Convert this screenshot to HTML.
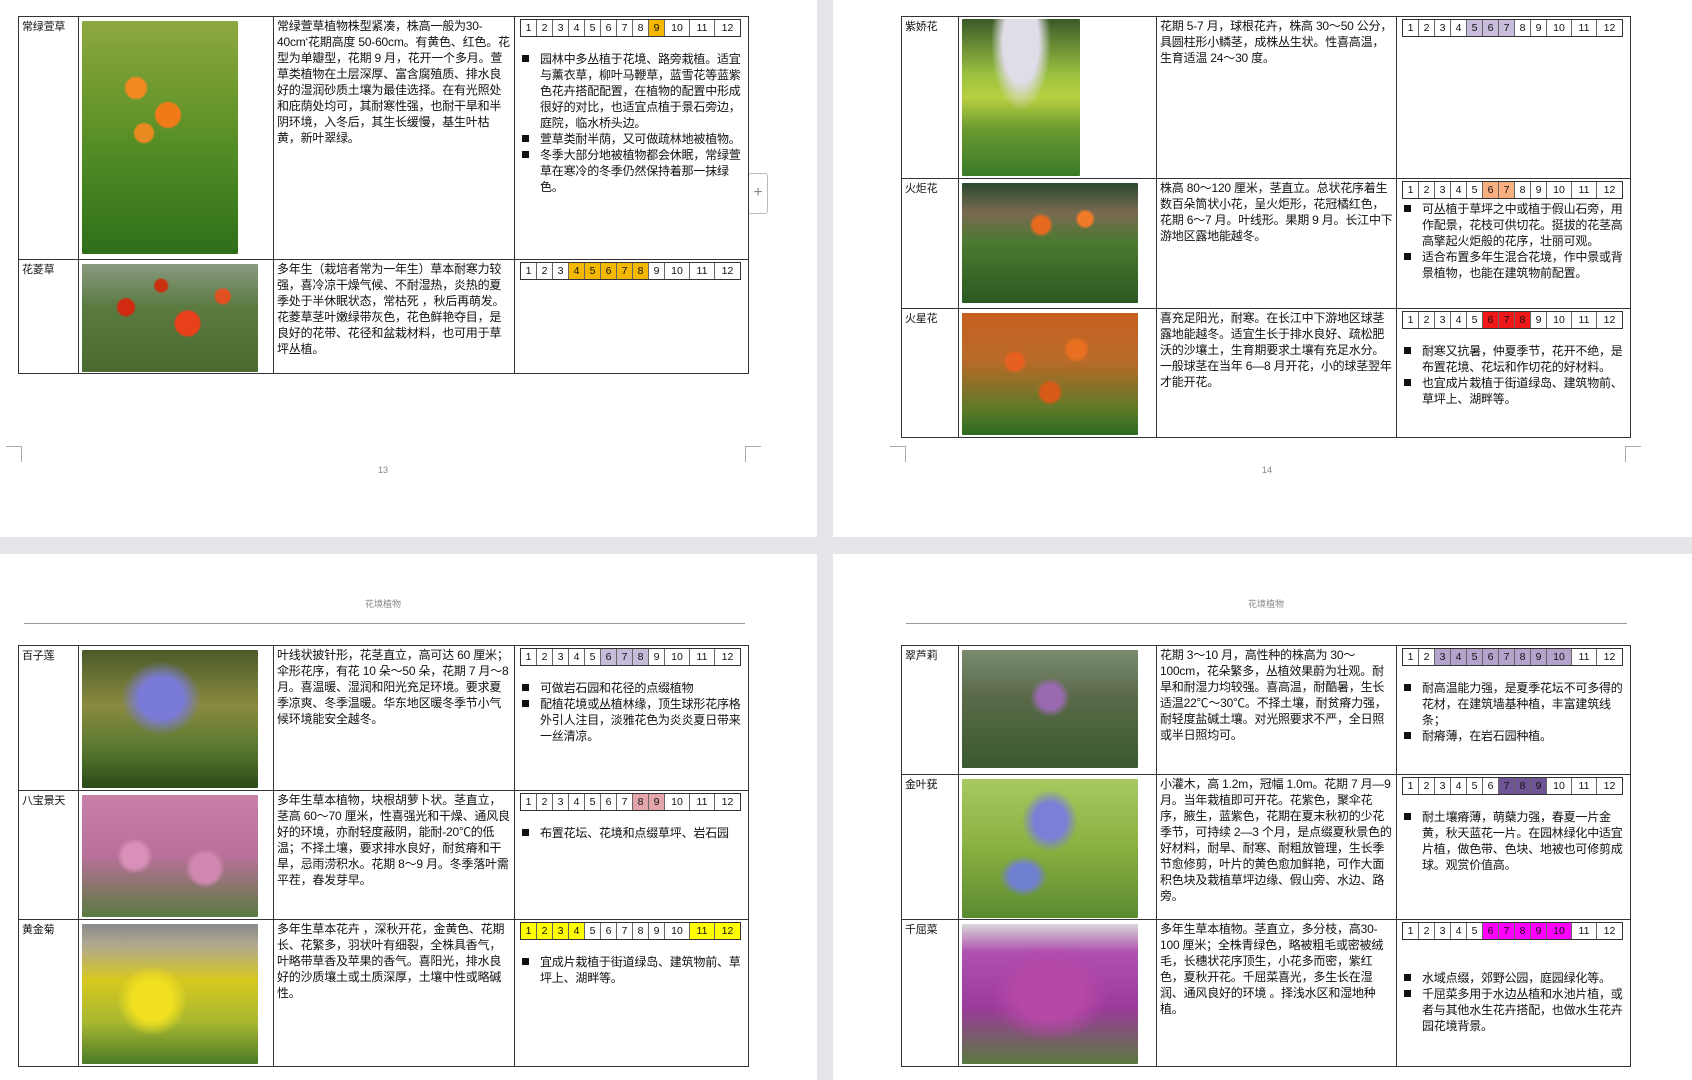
<!DOCTYPE html>
<html><head><meta charset="utf-8"><style>
*{margin:0;padding:0;box-sizing:border-box}
body{width:1692px;height:1080px;background:#e4e6e9;position:relative;overflow:hidden;font-family:"Liberation Sans","Noto Sans CJK SC",sans-serif;color:#111}
.pg{position:absolute;background:#fff}
.t{position:absolute;border-collapse:collapse;table-layout:fixed}
.t td{border:1.5px solid #333;vertical-align:top;font-size:12px;line-height:16px;padding:1px 3px;overflow:hidden;letter-spacing:-0.2px}
.t td.n{font-size:11px;padding:2px 3px}
.img{margin:3px 0 0 0;border-radius:1px}
.m{display:flex;border:1px solid #333;height:18px;width:221px;margin:1px 0 0 2px}
.m span{flex:0 0 16px;border-right:1px solid #666;font-size:10.5px;text-align:center;line-height:17px;letter-spacing:0}
.m span.w{flex:1 1 24px}
.m span:last-child{border-right:0}
ul{list-style:none;margin-top:14px}
li{position:relative;padding-left:22px;font-size:12px;line-height:16px}
li:before{content:"";position:absolute;left:4px;top:4px;width:7px;height:7px;background:#111}
.hd{position:absolute;font-size:9px;color:#888}
.hl{position:absolute;height:1px;background:#999}
.cm{position:absolute;border-color:#aaa;border-style:solid;width:16px;height:16px}
</style></head><body>
<div class="pg" style="left:0;top:0;width:817px;height:537px"></div>
<div class="pg" style="left:833px;top:0;width:859px;height:537px"></div>
<div class="pg" style="left:0;top:554px;width:817px;height:526px"></div>
<div class="pg" style="left:833px;top:554px;width:859px;height:526px"></div>

<div class="cm" style="left:6px;top:446px;border-width:1px 1px 0 0"></div>
<div class="cm" style="left:745px;top:446px;border-width:1px 0 0 1px"></div>
<div class="cm" style="left:890px;top:446px;border-width:1px 1px 0 0"></div>
<div class="cm" style="left:1625px;top:446px;border-width:1px 0 0 1px"></div>
<div class="hd" style="left:378px;top:465px">13</div>
<div class="hd" style="left:1262px;top:465px">14</div>
<div class="hd" style="left:365px;top:597px">花境植物</div>
<div class="hd" style="left:1248px;top:597px">花境植物</div>
<div class="hl" style="left:24px;top:623px;width:721px"></div>
<div class="hl" style="left:906px;top:623px;width:721px"></div>
<div style="position:absolute;left:748px;top:173px;width:20px;height:41px;border:1px solid #bbb;border-radius:3px;background:#fff;color:#888;font-size:16px;text-align:center;line-height:38px">+</div>

<!-- top-left -->
<table class="t" style="left:18px;top:16px;width:730px">
<colgroup><col style="width:60px"><col style="width:195px"><col style="width:241px"><col style="width:234px"></colgroup>
<tr style="height:243px"><td class="n">常绿萱草</td><td><div class="img" style="width:156px;height:233px;background:linear-gradient(180deg,#8ea840 0%,#6f9a2e 30%,#4e8a24 60%,#2f6e1a 100%)"><div style="position:relative;top:40px;left:30px;width:80px;height:90px;background:radial-gradient(circle at 30% 30%,#f08a20 0 10px,transparent 12px),radial-gradient(circle at 70% 60%,#f07a18 0 12px,transparent 14px),radial-gradient(circle at 40% 80%,#e88a20 0 9px,transparent 11px)"></div></div></td>
<td>常绿萱草植物株型紧凑，株高一般为30-40cm‘花期高度 50-60cm。有黄色、红色。花型为单瓣型，花期 9 月，花开一个多月。萱草类植物在土层深厚、富含腐殖质、排水良好的湿润砂质土壤为最佳选择。在有光照处和庇荫处均可，其耐寒性强，也耐干旱和半阴环境，入冬后，其生长缓慢，基生叶枯黄，新叶翠绿。</td>
<td><div class="m"><span>1</span><span>2</span><span>3</span><span>4</span><span>5</span><span>6</span><span>7</span><span>8</span><span style="background:#f5b800">9</span><span class="w">10</span><span class="w">11</span><span class="w">12</span></div>
<ul><li>园林中多丛植于花境、路旁栽植。适宜与薰衣草，柳叶马鞭草，蓝雪花等蓝紫色花卉搭配配置，在植物的配置中形成很好的对比，也适宜点植于景石旁边，庭院，临水桥头边。</li><li>萱草类耐半荫，又可做疏林地被植物。</li><li>冬季大部分地被植物都会休眠，常绿萱草在寒冷的冬季仍然保持着那一抹绿色。</li></ul></td></tr>
<tr style="height:113px"><td class="n">花菱草</td><td><div class="img" style="width:176px;height:108px;background:radial-gradient(circle at 60% 55%,#e84018 0 12px,transparent 14px),radial-gradient(circle at 25% 40%,#d02a10 0 8px,transparent 10px),radial-gradient(circle at 45% 20%,#c83010 0 6px,transparent 8px),radial-gradient(circle at 80% 30%,#e05020 0 7px,transparent 9px),linear-gradient(180deg,#8a9a80,#5a7a40 40%,#4a6a30)"></div></td>
<td>多年生（栽培者常为一年生）草本耐寒力较强，喜冷凉干燥气候、不耐湿热，炎热的夏季处于半休眠状态，常枯死 ，秋后再萌发。花菱草茎叶嫩绿带灰色，花色鲜艳夺目，是良好的花带、花径和盆栽材料，也可用于草坪丛植。</td>
<td><div class="m"><span>1</span><span>2</span><span>3</span><span style="background:#f5b800">4</span><span style="background:#f5b800">5</span><span style="background:#f5b800">6</span><span style="background:#f5b800">7</span><span style="background:#f5b800">8</span><span>9</span><span class="w">10</span><span class="w">11</span><span class="w">12</span></div></td></tr>
</table>

<!-- top-right -->
<table class="t" style="left:901px;top:16px;width:729px">
<colgroup><col style="width:57px"><col style="width:198px"><col style="width:240px"><col style="width:234px"></colgroup>
<tr style="height:162px"><td class="n">紫娇花</td><td><div class="img" style="margin-top:1px;width:118px;height:157px;background:radial-gradient(ellipse at 50% 15%,#e0dce8 0 18px,transparent 30px),linear-gradient(180deg,#3a5a28 0%,#9ac040 35%,#b8d040 50%,#6a9a30 70%,#3a7a28 100%)"></div></td>
<td>花期 5-7 月，球根花卉，株高 30～50 公分，具圆柱形小鳞茎，成株丛生状。性喜高温，生育适温 24～30 度。</td>
<td><div class="m"><span>1</span><span>2</span><span>3</span><span>4</span><span style="background:#c8bcdc">5</span><span style="background:#c8bcdc">6</span><span style="background:#c8bcdc">7</span><span>8</span><span>9</span><span class="w">10</span><span class="w">11</span><span class="w">12</span></div></td></tr>
<tr style="height:130px"><td class="n">火炬花</td><td><div class="img" style="width:176px;height:120px;background:radial-gradient(circle at 45% 35%,#e86a20 0 8px,transparent 12px),radial-gradient(circle at 70% 30%,#f07a28 0 7px,transparent 10px),linear-gradient(180deg,#2a4a30 0%,#7a6a50 25%,#4a7a30 50%,#2a5a20 100%)"></div></td>
<td>株高 80～120 厘米，茎直立。总状花序着生数百朵筒状小花，呈火炬形，花冠橘红色，花期 6～7 月。叶线形。果期 9 月。长江中下游地区露地能越冬。</td>
<td><div class="m"><span>1</span><span>2</span><span>3</span><span>4</span><span>5</span><span style="background:#f8b080">6</span><span style="background:#f8b080">7</span><span>8</span><span>9</span><span class="w">10</span><span class="w">11</span><span class="w">12</span></div>
<ul style="margin-top:2px"><li>可丛植于草坪之中或植于假山石旁，用作配景，花枝可供切花。挺拔的花茎高高擎起火炬般的花序，壮丽可观。</li><li>适合布置多年生混合花境，作中景或背景植物，也能在建筑物前配置。</li></ul></td></tr>
<tr style="height:129px"><td class="n">火星花</td><td><div class="img" style="width:176px;height:122px;background:radial-gradient(circle at 30% 40%,#e86020 0 8px,transparent 12px),radial-gradient(circle at 65% 30%,#e87020 0 9px,transparent 13px),radial-gradient(circle at 50% 65%,#d85a18 0 9px,transparent 13px),linear-gradient(180deg,#c86020 0%,#b86a28 40%,#5a7a28 80%,#2a6a20 100%)"></div></td>
<td>喜充足阳光，耐寒。在长江中下游地区球茎露地能越冬。适宜生长于排水良好、疏松肥沃的沙壤土，生育期要求土壤有充足水分。一般球茎在当年 6—8 月开花，小的球茎翌年才能开花。</td>
<td><div class="m"><span>1</span><span>2</span><span>3</span><span>4</span><span>5</span><span style="background:#f01818">6</span><span style="background:#f01818">7</span><span style="background:#f01818">8</span><span>9</span><span class="w">10</span><span class="w">11</span><span class="w">12</span></div>
<ul><li>耐寒又抗暑，仲夏季节，花开不绝，是布置花境、花坛和作切花的好材料。</li><li>也宜成片栽植于街道绿岛、建筑物前、草坪上、湖畔等。</li></ul></td></tr>
</table>

<!-- bottom-left -->
<table class="t" style="left:18px;top:645px;width:730px">
<colgroup><col style="width:60px"><col style="width:195px"><col style="width:241px"><col style="width:234px"></colgroup>
<tr style="height:145px"><td class="n">百子莲</td><td><div class="img" style="width:176px;height:138px;background:radial-gradient(ellipse at 45% 35%,#7a7ad8 0 22px,transparent 40px),linear-gradient(180deg,#4a5a28 0%,#8a8a40 40%,#5a7a30 70%,#2a4a18 100%)"></div></td>
<td>叶线状披针形，花茎直立，高可达 60 厘米；伞形花序，有花 10 朵～50 朵，花期 7 月～8 月。喜温暖、湿润和阳光充足环境。要求夏季凉爽、冬季温暖。华东地区暖冬季节小气候环境能安全越冬。</td>
<td><div class="m"><span>1</span><span>2</span><span>3</span><span>4</span><span>5</span><span style="background:#c4bcd8">6</span><span style="background:#c4bcd8">7</span><span style="background:#c4bcd8">8</span><span>9</span><span class="w">10</span><span class="w">11</span><span class="w">12</span></div>
<ul><li>可做岩石园和花径的点缀植物</li><li>配植花境或丛植林缘，顶生球形花序格外引人注目，淡雅花色为炎炎夏日带来一丝清凉。</li></ul></td></tr>
<tr style="height:129px"><td class="n">八宝景天</td><td><div class="img" style="width:176px;height:122px;background:radial-gradient(circle at 30% 50%,#d890b8 0 12px,transparent 18px),radial-gradient(circle at 70% 60%,#d088b0 0 14px,transparent 20px),linear-gradient(180deg,#c880a8 0%,#b87098 50%,#5a7a40 100%)"></div></td>
<td>多年生草本植物，块根胡萝卜状。茎直立，茎高 60～70 厘米，性喜强光和干燥、通风良好的环境，亦耐轻度蔽阴，能耐-20℃的低温；不择土壤，要求排水良好，耐贫瘠和干旱，忌雨涝积水。花期 8～9 月。冬季落叶需平茬，春发芽早。</td>
<td><div class="m"><span>1</span><span>2</span><span>3</span><span>4</span><span>5</span><span>6</span><span>7</span><span style="background:#e4a4ac">8</span><span style="background:#e4a4ac">9</span><span class="w">10</span><span class="w">11</span><span class="w">12</span></div>
<ul><li>布置花坛、花境和点缀草坪、岩石园</li></ul></td></tr>
<tr style="height:147px"><td class="n">黄金菊</td><td><div class="img" style="width:176px;height:140px;background:radial-gradient(circle at 40% 55%,#f0e020 0 20px,transparent 35px),linear-gradient(180deg,#8a8a8a 0%,#b0a890 15%,#d8c820 40%,#a8b830 70%,#4a7a28 100%)"></div></td>
<td>多年生草本花卉 ，深秋开花，金黄色、花期长、花繁多，羽状叶有细裂，全株具香气，叶略带草香及苹果的香气。喜阳光，排水良好的沙质壤土或土质深厚，土壤中性或略碱性。</td>
<td><div class="m"><span style="background:#ffff00">1</span><span style="background:#ffff00">2</span><span style="background:#ffff00">3</span><span style="background:#ffff00">4</span><span>5</span><span>6</span><span>7</span><span>8</span><span>9</span><span class="w">10</span><span class="w" style="background:#ffff00">11</span><span class="w" style="background:#ffff00">12</span></div>
<ul><li>宜成片栽植于街道绿岛、建筑物前、草坪上、湖畔等。</li></ul></td></tr>
</table>

<!-- bottom-right -->
<table class="t" style="left:901px;top:645px;width:729px">
<colgroup><col style="width:57px"><col style="width:198px"><col style="width:240px"><col style="width:234px"></colgroup>
<tr style="height:129px"><td class="n">翠芦莉</td><td><div class="img" style="width:176px;height:118px;background:radial-gradient(circle at 50% 40%,#9a6ab0 0 12px,transparent 20px),linear-gradient(180deg,#7a8a70 0%,#5a6a48 40%,#3a5a30 100%)"></div></td>
<td>花期 3～10 月，高性种的株高为 30～100cm，花朵繁多，丛植效果蔚为壮观。耐旱和耐湿力均较强。喜高温，耐酷暑，生长适温22℃～30℃。不择土壤，耐贫瘠力强，耐轻度盐碱土壤。对光照要求不严，全日照或半日照均可。</td>
<td><div class="m"><span>1</span><span>2</span><span style="background:#b4a4cc">3</span><span style="background:#b4a4cc">4</span><span style="background:#b4a4cc">5</span><span style="background:#b4a4cc">6</span><span style="background:#b4a4cc">7</span><span style="background:#b4a4cc">8</span><span style="background:#b4a4cc">9</span><span class="w" style="background:#b4a4cc">10</span><span class="w">11</span><span class="w">12</span></div>
<ul><li>耐高温能力强，是夏季花坛不可多得的花材，在建筑墙基种植，丰富建筑线条；</li><li>耐瘠薄，在岩石园种植。</li></ul></td></tr>
<tr style="height:145px"><td class="n">金叶莸</td><td><div class="img" style="width:176px;height:139px;background:radial-gradient(ellipse at 50% 30%,#7a80d8 0 16px,transparent 28px),radial-gradient(ellipse at 35% 70%,#7080d0 0 14px,transparent 24px),linear-gradient(180deg,#a8c860 0%,#88b040 50%,#5a8a30 100%)"></div></td>
<td>小灌木，高 1.2m，冠幅 1.0m。花期 7 月—9 月。当年栽植即可开花。花紫色，聚伞花序，腋生，蓝紫色，花期在夏末秋初的少花季节，可持续 2—3 个月，是点缀夏秋景色的好材料，耐旱、耐寒、耐粗放管理，生长季节愈修剪，叶片的黄色愈加鲜艳，可作大面积色块及栽植草坪边缘、假山旁、水边、路旁。</td>
<td><div class="m"><span>1</span><span>2</span><span>3</span><span>4</span><span>5</span><span>6</span><span style="background:#6e5494">7</span><span style="background:#6e5494">8</span><span style="background:#6e5494">9</span><span class="w">10</span><span class="w">11</span><span class="w">12</span></div>
<ul><li>耐土壤瘠薄，萌蘖力强，春夏一片金黄，秋天蓝花一片。在园林绿化中适宜片植，做色带、色块、地被也可修剪成球。观赏价值高。</li></ul></td></tr>
<tr style="height:147px"><td class="n">千屈菜</td><td><div class="img" style="width:176px;height:140px;background:radial-gradient(ellipse at 50% 50%,#b848a8 0 30px,transparent 60px),linear-gradient(180deg,#d8d8d8 0%,#b050b0 20%,#9a3a9a 60%,#5a7a40 100%)"></div></td>
<td>多年生草本植物。茎直立，多分枝，高30-100 厘米；全株青绿色，略被粗毛或密被绒毛，长穗状花序顶生，小花多而密，紫红色，夏秋开花。千屈菜喜光，多生长在湿润、通风良好的环境 。择浅水区和湿地种植。</td>
<td><div class="m"><span>1</span><span>2</span><span>3</span><span>4</span><span>5</span><span style="background:#ff00ff">6</span><span style="background:#ff00ff">7</span><span style="background:#ff00ff">8</span><span style="background:#ff00ff">9</span><span class="w" style="background:#ff00ff">10</span><span class="w">11</span><span class="w">12</span></div>
<ul style="margin-top:30px"><li>水域点缀，郊野公园，庭园绿化等。</li><li>千屈菜多用于水边丛植和水池片植，或者与其他水生花卉搭配，也做水生花卉园花境背景。</li></ul></td></tr>
</table>
</body></html>
